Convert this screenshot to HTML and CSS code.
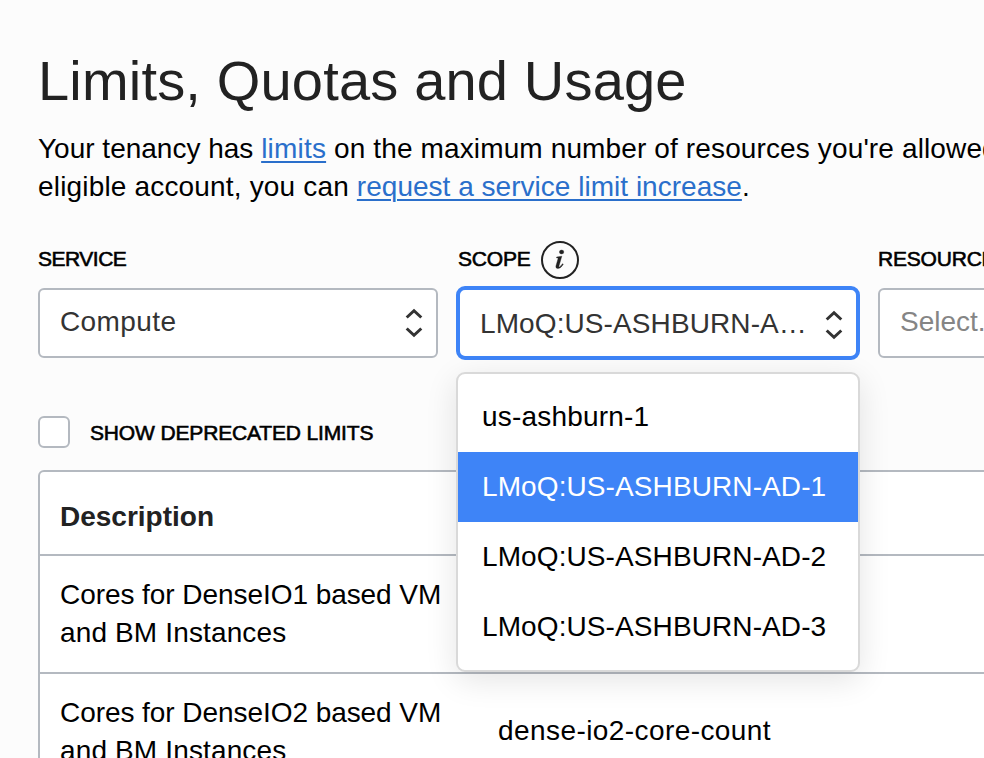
FILE: index.html
```html
<!DOCTYPE html>
<html lang="en">
<head>
<meta charset="utf-8">
<title>Limits, Quotas and Usage</title>
<link rel="stylesheet" href="styles.css">
</head>
<body>
<main class="page">
  <h1 class="title">Limits, Quotas and Usage</h1>
  <p class="intro">
    <span class="line">Your tenancy has <a class="t-limits" href="#">limits</a><span class="t-intro1"> on the maximum number of resources you're allowed</span></span>
    <span class="line t-intro2">eligible account, you can <a href="#">request a service limit increase</a>.</span>
  </p>
  <div class="filters">
    <div class="field">
      <div class="label"><span class="t-service">SERVICE</span></div>
      <div class="select"><span class="value t-compute">Compute</span>
        <svg class="arrows" viewBox="0 0 20 32"><path d="M2.700 10.500 10 3.700l7.300 6.800M2.700 21.500 10 28.300l7.300-6.800"/></svg>
      </div>
    </div>
    <div class="field">
      <div class="label"><span class="t-scope">SCOPE</span>
        <svg class="info" viewBox="0 0 38 38"><circle cx="19" cy="19" r="18"/><path class="stem" d="M15.600 16.100 20.800 15.200 17.900 25.200Q17.700 26.300 18.500 25.900 20 25 21.500 22.700L22.300 23.200Q19.500 27.800 16.700 27.500 14.300 27.200 15 24.800L17.100 17.600Q17.300 16.800 15.500 16.800Z"/><ellipse class="stem" cx="20.600" cy="11" rx="2.200" ry="1.900"/></svg>
      </div>
      <div class="select focused"><span class="value t-selected">LMoQ:US-ASHBURN-A…</span>
        <svg class="arrows" viewBox="0 0 20 32"><path d="M2.700 10.500 10 3.700l7.300 6.800M2.700 21.500 10 28.300l7.300-6.800"/></svg>
      </div>
      <ul class="menu">
        <li><span class="t-region">us-ashburn-1</span></li>
        <li class="active"><span class="t-ad">LMoQ:US-ASHBURN-AD-1</span></li>
        <li><span class="t-ad">LMoQ:US-ASHBURN-AD-2</span></li>
        <li><span class="t-ad">LMoQ:US-ASHBURN-AD-3</span></li>
      </ul>
    </div>
    <div class="field">
      <div class="label"><span class="t-resource">RESOURCE</span></div>
      <div class="select"><span class="value placeholder">Select...</span></div>
    </div>
  </div>
  <div class="check"><span class="box"></span><span class="t-check">SHOW DEPRECATED LIMITS</span></div>
  <div class="table">
    <div class="row head"><div class="cell">Description</div></div>
    <div class="row">
      <div class="cell"><span class="line t-cores">Cores for DenseIO1 based VM</span><span class="line t-inst">and BM Instances</span></div>
    </div>
    <div class="row">
      <div class="cell"><span class="line t-cores">Cores for DenseIO2 based VM</span><span class="line t-inst">and BM Instances</span></div>
      <div class="cell name">dense-io2-core-count</div>
    </div>
  </div>
</main>
</body>
</html>
```
FILE: styles.css
```css
* { box-sizing: border-box; }
html, body { height: 100%; overflow: hidden; }
body {
  margin: 0;
  background: #fcfcfc;
  color: #000;
  font: 28px/38px "Liberation Sans", Arial, sans-serif;
  white-space: nowrap;
}
.page { padding: 47px 0 0 38px; }
.title { margin: 0; height: 83px; font-size: 56px; font-weight: 400; line-height: 68px; letter-spacing: 0.18px; color: #222; }
.intro { margin: 0; height: 110px; }
.line { display: block; }
.intro a { color: #2a6fcb; text-decoration-thickness: 2px; text-underline-offset: 3px; }
.t-limits { letter-spacing: 0.2px; }
.t-intro1 { letter-spacing: 0.13px; }
.t-intro2 { letter-spacing: 0.17px; }
.t-intro2 a { letter-spacing: 0.02px; }
.filters { display: flex; gap: 20px; }
.field { position: relative; flex: 0 0 400px; }
.label { display: flex; align-items: center; gap: 10px; height: 38px; margin-bottom: 10px; font-size: 21px; -webkit-text-stroke: 0.6px #000; }
.t-service { letter-spacing: -0.5px; }
.t-scope, .t-resource { letter-spacing: -0.2px; }
.t-check { padding-top: 2px; letter-spacing: -0.15px; }
.t-compute { letter-spacing: 0.4px; }
.t-selected, .t-ad { letter-spacing: 0.1px; }
.t-region { letter-spacing: 0.2px; }
.t-cores { letter-spacing: -0.06px; }
.t-inst { letter-spacing: 0.14px; }
.select {
  display: flex; align-items: center; justify-content: space-between;
  height: 70px; padding: 0 12px 2px 20px;
  border: 2px solid #b4b9c0; border-radius: 6px; background: #fff; color: #333;
}
.focused { height: 74px; margin: -2px -2px 0; padding: 1px 12px 0 20px; border: 4px solid #3e84f7; border-radius: 9px; }
.placeholder { color: #858585; }
.arrows { width: 20px; height: 32px; margin-top: 2px; fill: none; stroke: #333; stroke-width: 3; }
.info { width: 38px; height: 38px; margin-top: 2px; fill: none; stroke: #222; stroke-width: 2; }
.stem { fill: #222; stroke: #222; stroke-width: 0.4; }
.menu {
  position: absolute; top: 132px; left: -2px; width: 404px; z-index: 2;
  margin: 0; padding: 8px 0; list-style: none;
  border: 2px solid #d9d9d9; border-radius: 9px; background: #fff;
  box-shadow: 0 8px 32px rgba(0, 0, 0, 0.11);
}
.menu li { height: 70px; padding-left: 24px; line-height: 70px; }
.menu .active { background: #3e84f7; color: #fff; }
.check { display: flex; align-items: center; gap: 20px; height: 32px; margin: 56px 0 22px; font-size: 21px; -webkit-text-stroke: 0.6px #000; }
.box { width: 32px; height: 32px; border: 2px solid #b4b9c0; border-radius: 6px; background: #fff; }
.table { width: 1400px; border: 2px solid #b4b9c0; border-radius: 6px; background: #fff; }
.row { display: flex; height: 118px; padding: 20px 0 0 20px; border-bottom: 2px solid #b4b9c0; }
.head { height: 84px; padding-top: 26px; color: #222; font-weight: 700; }
.cell { flex: 0 0 438px; }
.name { line-height: 74px; letter-spacing: 0.42px; }
```
